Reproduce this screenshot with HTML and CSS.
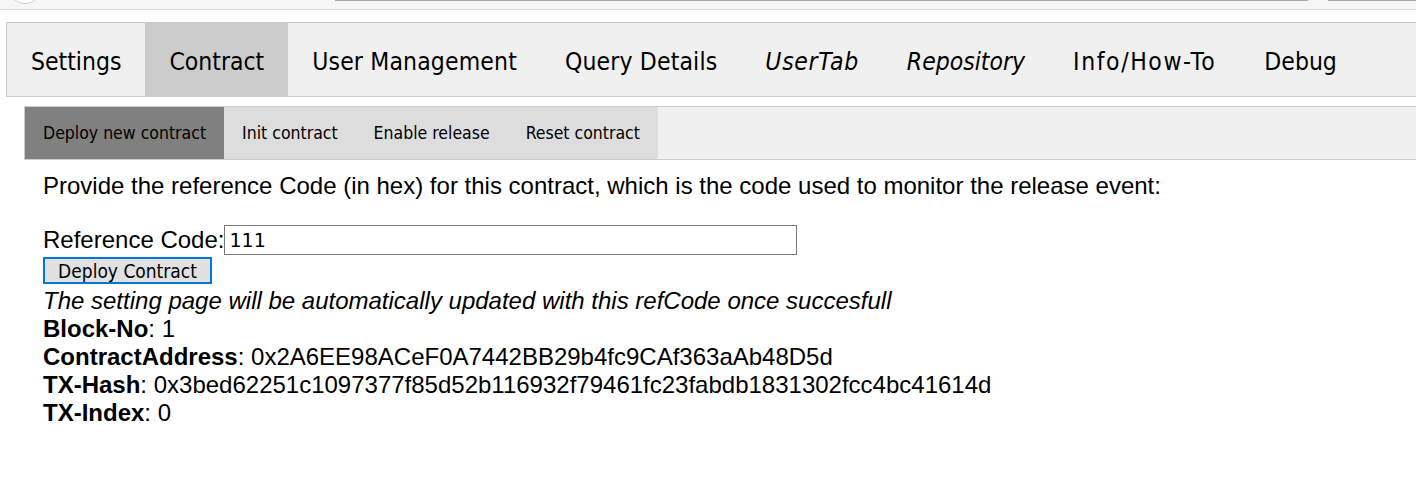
FILE: index.html
```html
<!DOCTYPE html>
<html>
<head>
<meta charset="utf-8">
<link rel="stylesheet" href="styles.css">
</head>
<body>
<div class="chrome">
  <span class="chrome-circle"></span>
  <span class="chrome-address"></span>
  <span class="chrome-right"></span>
</div>
<div class="page">
  <div class="tabbar">
    <button class="tab">Settings</button>
    <button class="tab active">Contract</button>
    <button class="tab mid">User Management</button>
    <button class="tab mid">Query Details</button>
    <button class="tab italic loose">UserTab</button>
    <button class="tab italic">Repository</button>
    <button class="tab wide">Info/How-To</button>
    <button class="tab">Debug</button>
  </div>
  <div class="tabcontent">
    <div class="subbar">
      <div class="subtabs">
        <button class="subtab active">Deploy new contract</button>
        <button class="subtab">Init contract</button>
        <button class="subtab">Enable release</button>
        <button class="subtab">Reset contract</button>
      </div>
    </div>
    <div class="subcontent">
      <div class="line">Provide the reference Code (in hex) for this contract, which is the code used to monitor the release event:</div>
      <div class="line blank">&nbsp;</div>
      <div class="line field"><label for="ref">Reference Code:</label><input id="ref" class="refinput" type="text" value="111"></div>
      <div class="btnrow"><button class="deploy">Deploy Contract</button></div>
      <div class="line"><em>The setting page will be automatically updated with this refCode once succesfull</em></div>
      <div class="line"><b>Block-No</b>: 1</div>
      <div class="line"><b>ContractAddress</b>: 0x2A6EE98ACeF0A7442BB29b4fc9CAf363aAb48D5d</div>
      <div class="line"><b>TX-Hash</b>: 0x3bed62251c1097377f85d52b116932f79461fc23fabdb1831302fcc4bc41614d</div>
      <div class="line"><b>TX-Index</b>: 0</div>
    </div>
  </div>
</div>
</body>
</html>
```
FILE: styles.css
```css
html, body {
  margin: 0;
  padding: 0;
  background: #ffffff;
  overflow: hidden;
}
.chrome {
  position: relative;
  height: 9px;
  background: #f6f6f6;
  border-bottom: 1px solid #dcdcdc;
  display: flex;
}
.chrome-circle {
  position: absolute;
  left: 8px;
  top: -30px;
  width: 32px;
  height: 32px;
  border-radius: 50%;
  border: 1px solid #d0d0d0;
  background: #ffffff;
}
.chrome-address {
  margin-left: 335px;
  width: 973px;
  height: 1px;
  background: #a8a8a8;
}
.chrome-right {
  margin-left: 20px;
  flex: 1;
  height: 1px;
  background: #a8a8a8;
}
.page {
  padding-top: 12px;
  padding-left: 6px;
}
.tabbar {
  display: flex;
  background: #f0f0f0;
  border: 1px solid #cccccc;
  border-right: none;
}
.tab {
  font-family: "DejaVu Sans Condensed", "DejaVu Sans", sans-serif;
  font-size: 24.5px;
  line-height: 31px;
  padding: 23px 24px 19px;
  border: none;
  background: transparent;
  color: #000;
  margin: 0;
  cursor: pointer;
}
.tab.italic {
  font-style: italic;
}
.tab.mid {
  letter-spacing: 0.15px;
}
.tab.loose {
  letter-spacing: 0.7px;
}
.tab.wide {
  letter-spacing: 1.6px;
}
.tab.active {
  background: #cccccc;
}
.tabcontent {
  padding: 9px 0 0 18px;
}
.subbar {
  display: flex;
  background: #f0f0f0;
  border: 1px solid #cccccc;
  border-right: none;
}
.subtabs {
  display: flex;
  background: #dddddd;
}
.subtab {
  font-family: "DejaVu Sans Condensed", "DejaVu Sans", sans-serif;
  font-size: 17.5px;
  line-height: 22px;
  padding: 15px 18px;
  border: none;
  background: transparent;
  color: #000;
  margin: 0;
}
.subtab.active {
  background: #808080;
}
.subcontent {
  padding: 12px 0 0 19px;
  font-family: "Liberation Sans", Arial, sans-serif;
  font-size: 24px;
  line-height: 28px;
  color: #000;
}
.field {
  display: flex;
  align-items: center;
  height: 30px;
  margin-top: -3px;
}
.refinput {
  box-sizing: border-box;
  width: 573px;
  height: 30px;
  margin: 0;
  padding: 0 4px;
  border: 1px solid #767676;
  font-family: "DejaVu Sans", sans-serif;
  font-size: 19px;
  color: #000;
  outline: none;
}
.btnrow {
  display: flex;
  padding: 2px 0 3px;
}
.deploy {
  box-sizing: border-box;
  width: 169px;
  height: 27px;
  margin: 0;
  padding: 0;
  border: 2px solid #0078d7;
  background: #e1e1e1;
  font-family: "DejaVu Sans Condensed", "DejaVu Sans", sans-serif;
  font-size: 19px;
  line-height: 22px;
  color: #000;
}
```
